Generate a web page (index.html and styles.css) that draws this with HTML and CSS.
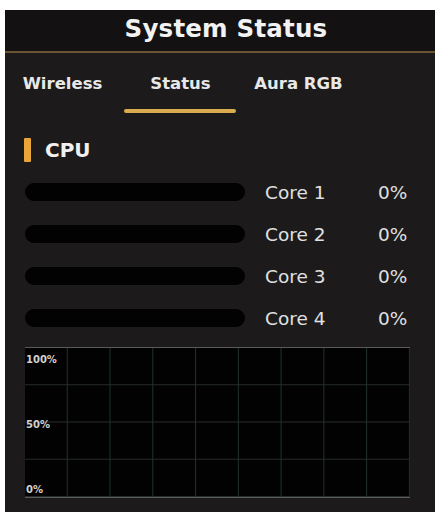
FILE: index.html
```html
<!DOCTYPE html>
<html>
<head>
<meta charset="utf-8">
<link rel="stylesheet" href="styles.css">
</head>
<body>
<div class="panel">
  <div class="header"><span class="title">System Status</span></div>
  <div class="tabs">
    <div class="tab t1"><span class="tab-label">Wireless</span><span class="tab-line"></span></div>
    <div class="tab t2 active"><span class="tab-label">Status</span><span class="tab-line"></span></div>
    <div class="tab t3"><span class="tab-label">Aura RGB</span><span class="tab-line"></span></div>
  </div>
  <div class="section">
    <div class="section-head"><span class="marker"></span><span class="section-title">CPU</span></div>
    <div class="cores">
      <div class="core"><span class="bar"></span><span class="core-name">Core 1</span><span class="core-val">0%</span></div>
      <div class="core"><span class="bar"></span><span class="core-name">Core 2</span><span class="core-val">0%</span></div>
      <div class="core"><span class="bar"></span><span class="core-name">Core 3</span><span class="core-val">0%</span></div>
      <div class="core"><span class="bar"></span><span class="core-name">Core 4</span><span class="core-val">0%</span></div>
    </div>
    <div class="graph">
      <span class="glabel">100%</span>
      <span class="glabel">50%</span>
      <span class="glabel">0%</span>
    </div>
  </div>
</div>
</body>
</html>
```
FILE: styles.css
```css
html, body {
  margin: 0;
  padding: 0;
  background: #ffffff;
}
body {
  font-family: "DejaVu Sans", Verdana, sans-serif;
  color: #e6e6e6;
}
.panel {
  margin: 10px 0 0 5px;
  width: 430px;
  height: 502px;
  background: #1c1a1b;
  overflow: hidden;
}
.header {
  background: #131112;
  border-bottom: 2px solid #6a5333;
  display: flex;
  align-items: center;
  justify-content: center;
  padding: 0 0 5px 12px;
  box-sizing: border-box;
  height: 43px;
}
.title {
  font-family: "DejaVu Sans", sans-serif;
  font-weight: bold;
  font-size: 24.5px;
  color: #f2f2f2;
  letter-spacing: 0.2px;
}
.tabs {
  display: flex;
  padding-left: 0;
}
.tab {
  display: flex;
  flex-direction: column;
  align-items: center;
  padding-top: 20px;
}
.t1 { width: 119px; }
.t2 { width: 112px; }
.t3 { width: 125px; }
.t1 .tab-label { margin-right: 4px; }
.t2 .tab-label { margin-left: 1px; }
.tab-label {
  font-weight: bold;
  font-size: 16.5px;
  line-height: 22px;
  color: #e8e8e8;
}
.tab-line {
  margin-top: 14px;
  height: 4px;
  width: 100%;
  border-radius: 2px;
}
.active .tab-line {
  background: #d9ac4f;
}
.section {
  padding: 25px 0 0 19px;
}
.section-head {
  display: flex;
  align-items: center;
  height: 24px;
}
.marker {
  width: 7px;
  height: 24px;
  background: #e9a535;
  border-radius: 1px;
}
.section-title {
  margin-left: 14px;
  font-weight: bold;
  font-size: 20px;
  color: #f0f0f0;
}
.cores {
  margin-top: 9px;
  display: flex;
  flex-direction: column;
}
.core {
  height: 42px;
  display: flex;
  align-items: center;
}
.bar {
  margin-left: 1px;
  width: 220px;
  height: 18px;
  border-radius: 9px;
  background: #020202;
}
.core-name {
  margin-left: 20px;
  width: 113px;
  font-size: 18.5px;
  color: #e0e0e0;
}
.core-val {
  font-size: 18.5px;
  color: #e0e0e0;
}
.graph {
  margin-top: 8px;
  margin-left: 1px;
  width: 385px;
  background-color: #020202;
  background-image:
    linear-gradient(to right, #1f3327 1px, transparent 1px),
    linear-gradient(to bottom, #262c28 1px, transparent 1px);
  background-size: calc(100% / 9) 100%, 100% calc(100% / 4);
  background-position: -1px 0, 0 -1px;
  border-top: 1px solid #5a5a5a;
  border-bottom: 1px solid #5a5a5a;
  display: flex;
  flex-direction: column;
  justify-content: space-between;
  padding: 7px 0 2px 0;
  box-sizing: border-box;
  height: 151px;
}
.glabel {
  font-weight: bold;
  font-size: 10px;
  line-height: 10px;
  color: #d0d0d0;
  padding-left: 1px;
}
```
